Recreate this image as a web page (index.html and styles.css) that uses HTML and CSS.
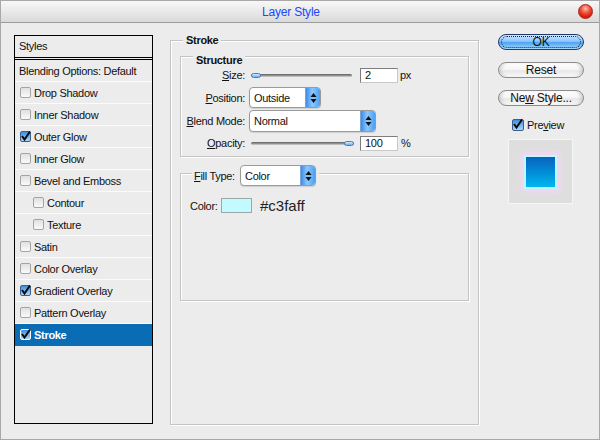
FILE: index.html
```html
<!DOCTYPE html>
<html>
<head>
<meta charset="utf-8">
<link rel="stylesheet" href="styles.css">
</head>
<body>
<div class="window">
  <div class="titlebar">
    <span class="title">Layer Style</span>
    <span class="close"></span>
  </div>
  <div class="content">
    <div class="styles">
      <div class="styles-head">Styles</div>
      <div class="row plain">Blending Options: Default</div>
      <div class="row"><span class="cb"></span>Drop Shadow</div>
      <div class="row"><span class="cb"></span>Inner Shadow</div>
      <div class="row"><span class="cb on"><svg viewBox="0 0 11 11"><path d="M2 5 L4.5 8.5 L10 0.5"/></svg></span>Outer Glow</div>
      <div class="row"><span class="cb"></span>Inner Glow</div>
      <div class="row"><span class="cb"></span>Bevel and Emboss</div>
      <div class="row sub"><span class="cb"></span>Contour</div>
      <div class="row sub"><span class="cb"></span>Texture</div>
      <div class="row"><span class="cb"></span>Satin</div>
      <div class="row"><span class="cb"></span>Color Overlay</div>
      <div class="row"><span class="cb on"><svg viewBox="0 0 11 11"><path d="M2 5 L4.5 8.5 L10 0.5"/></svg></span>Gradient Overlay</div>
      <div class="row"><span class="cb"></span>Pattern Overlay</div>
      <div class="row selected"><span class="cb on"><svg viewBox="0 0 11 11"><path d="M2 5 L4.5 8.5 L10 0.5"/></svg></span>Stroke</div>
    </div>

    <div class="group stroke-group">
      <div class="group-title">Stroke</div>
      <div class="group structure">
        <div class="group-title">Structure</div>
        <div class="frow r-size">
          <span class="lbl"><u>S</u>ize:</span>
          <span class="slider"><span class="thumb"></span></span>
          <span class="input">2</span>
          <span class="unit">px</span>
        </div>
        <div class="frow r-pos">
          <span class="lbl"><u>P</u>osition:</span>
          <span class="select w-pos"><span class="sel-text">Outside</span><span class="arrows"><svg viewBox="0 0 7 12"><path d="M0.5 5 L3.5 1 L6.5 5Z M0.5 7 L3.5 11 L6.5 7Z"/></svg></span></span>
        </div>
        <div class="frow r-blend">
          <span class="lbl"><u>B</u>lend Mode:</span>
          <span class="select w-blend"><span class="sel-text">Normal</span><span class="arrows"><svg viewBox="0 0 7 12"><path d="M0.5 5 L3.5 1 L6.5 5Z M0.5 7 L3.5 11 L6.5 7Z"/></svg></span></span>
        </div>
        <div class="frow r-op">
          <span class="lbl"><u>O</u>pacity:</span>
          <span class="slider end"><span class="thumb"></span></span>
          <span class="input">100</span>
          <span class="unit pct">%</span>
        </div>
      </div>
      <div class="group fill">
        <div class="fill-title">
          <span class="fill-lbl"><u>F</u>ill Type:</span>
          <span class="select w-fill"><span class="sel-text">Color</span><span class="arrows"><svg viewBox="0 0 7 12"><path d="M0.5 5 L3.5 1 L6.5 5Z M0.5 7 L3.5 11 L6.5 7Z"/></svg></span></span>
        </div>
        <div class="color-row">
          <span class="color-lbl">Color:</span>
          <span class="swatch"></span>
          <span class="hex">#c3faff</span>
        </div>
      </div>
    </div>

    <div class="side">
      <div class="btn ok"><span class="focus">OK</span></div>
      <div class="btn">Reset</div>
      <div class="btn">Ne<u>w</u> Style...</div>
      <div class="preview-chk"><span class="cb on"><svg viewBox="0 0 11 11"><path d="M2 5 L4.5 8.5 L10 0.5"/></svg></span>Pre<u>v</u>iew</div>
      <div class="preview"><div class="pv-square"></div></div>
    </div>
  </div>
</div>
</body>
</html>
```

FILE: styles.css
```css
* { box-sizing: border-box; margin: 0; padding: 0; }
html, body { width: 600px; height: 440px; overflow: hidden; }
body {
  font-family: "Liberation Sans", Arial, sans-serif;
  font-size: 11px;
  letter-spacing: -0.3px;
  color: #111;
  background: #ececec;
}
u { text-decoration: underline; text-underline-offset: 1px; }

.window {
  width: 600px;
  height: 440px;
  border: 1px solid #a8a8a8;
  background: #ececec;
  display: flex;
  flex-direction: column;
}

.titlebar {
  height: 22px;
  flex: none;
  background: linear-gradient(#f8f8f8, #e6e6e6 60%, #d9d9d9);
  border-bottom: 1px solid #9c9c9c;
  display: flex;
  align-items: center;
}
.title {
  margin-left: 261px;
  color: #1a47ff;
  font-size: 12px;
  letter-spacing: -0.2px;
}
.close {
  margin-left: auto;
  margin-right: 6px;
  width: 15px;
  height: 15px;
  border-radius: 50%;
  border: 1px solid #a0281c;
  background: radial-gradient(circle at 50% 28%, #ffc0b4 0, #f25a45 35%, #d8200f 70%, #b01a0c 100%);
}

.content {
  flex: 1;
  display: flex;
  padding: 12px 0 0 13px;
}

/* styles list */
.styles {
  width: 139px;
  height: 389px;
  flex: none;
  border: 1px solid #000;
  display: flex;
  flex-direction: column;
}
.styles-head {
  height: 24px;
  line-height: 21px;
  padding-left: 4px;
  border-bottom: 3px double #000;
}
.row {
  height: 22px;
  display: flex;
  align-items: center;
  padding-left: 5px;
  border-bottom: 1px solid #fbfbfb;
  white-space: nowrap;
}
.row.plain { padding-left: 4px; }
.row.sub { padding-left: 18px; }
.row.selected {
  background: #0b6cb6;
  color: #fff;
  font-weight: bold;
  border-bottom-color: #0b6cb6;
}

.cb {
  width: 11px;
  height: 11px;
  flex: none;
  margin-right: 3px;
  border: 1px solid #a4a4a4;
  border-radius: 2px;
  background: linear-gradient(#e0e0e0, #fafafa);
  display: inline-flex;
}
.cb.on {
  border-color: #3a5f8c;
  background: linear-gradient(#3f8fe0, #a8d6fb);
}
.cb svg {
  width: 11px;
  height: 11px;
  margin: -1px 0 0 -1px;
  overflow: visible;
}
.cb svg path { fill: none; stroke: #0a0a0a; stroke-width: 2; }
.selected .cb.on { border-color: #fff; }

/* group boxes */
.group {
  border: 1px solid #c4c4c4;
  box-shadow: inset 1px 1px 0 #fff, 1px 1px 0 #fff;
}
.group-title {
  width: fit-content;
  background: #ececec;
  font-weight: bold;
  line-height: 13px;
  padding: 0 3px;
  margin: -7px 0 0 12px;
}

.stroke-group {
  width: 309px;
  height: 385px;
  flex: none;
  margin: 5px 0 0 17px;
  display: flex;
  flex-direction: column;
}
.structure {
  margin: 9px 9px 0 9px;
  padding: 4px 0 5px 0;
}

.frow {
  display: flex;
  align-items: center;
}
.lbl {
  width: 64px;
  text-align: right;
  flex: none;
  margin-right: 4px;
}
.r-size { height: 16px; }
.r-pos { height: 21px; margin-top: 4px; }
.r-blend { height: 22px; margin-top: 2px; }
.r-op { height: 16px; margin-top: 3px; }

.slider {
  width: 101px;
  height: 3px;
  margin-left: 2px;
  border-radius: 2px;
  background: linear-gradient(#5e5e5e, #9a9a9a 60%, #d8d8d8);
  display: flex;
  align-items: center;
}
.slider.end { width: 103px; justify-content: flex-end; }
.thumb {
  width: 10px;
  height: 5px;
  border-radius: 3px;
  border: 1px solid #4a7fb8;
  background: linear-gradient(#d8ecff, #6aaef0);
}
.input {
  width: 38px;
  height: 15px;
  margin-left: 8px;
  background: #fff;
  border: 1px solid #7d7d7d;
  border-right-color: #c8c8c8;
  border-bottom-color: #c8c8c8;
  padding-left: 4px;
  line-height: 13px;
  font-size: 11px;
}
.r-op .input { margin-left: 6px; }
.unit { margin-left: 2px; }
.pct { margin-left: 3px; }

.select {
  height: 21px;
  display: flex;
  align-items: stretch;
  background: #fff;
  border: 1px solid #9a9a9a;
  border-radius: 4px;
  box-shadow: 0 1px 1px rgba(0,0,0,0.12);
  overflow: hidden;
}
.sel-text {
  flex: 1;
  padding-left: 4px;
  display: flex;
  align-items: center;
  font-size: 11px;
}
.arrows {
  width: 15px;
  flex: none;
  display: flex;
  align-items: center;
  justify-content: center;
  border-left: 1px solid #7aa6d6;
  background: linear-gradient(to right, #3c8ce8, #8cc8ff 45%, #4aa0f2);
}
.arrows svg { width: 7px; height: 12px; }
.arrows svg path { fill: #111; }
.w-pos { width: 72px; }
.w-blend { width: 127px; height: 22px; }
.w-fill { width: 76px; }

.fill {
  height: 128px;
  flex: none;
  margin: 16px 9px 0 9px;
}
.fill-title {
  width: fit-content;
  display: flex;
  align-items: center;
  background: #ececec;
  margin: -9px 0 0 11px;
  padding: 0 3px 0 2px;
}
.fill-lbl { width: 46px; }
.color-row {
  display: flex;
  align-items: center;
  margin: 11px 0 0 9px;
}
.color-lbl { width: 31px; }
.swatch {
  width: 31px;
  height: 15px;
  background: #c3faff;
  border: 1px solid #9aa8aa;
}
.hex {
  margin-left: 8px;
  font-size: 15px;
  letter-spacing: 0;
  color: #222;
}

/* side buttons */
.side {
  width: 86px;
  flex: none;
  margin: -1px 0 0 19px;
  display: flex;
  flex-direction: column;
}
.btn {
  height: 16px;
  margin-bottom: 12px;
  border-radius: 8px;
  border: 1px solid #8c8c8c;
  background: linear-gradient(#ffffff, #f4f4f4 50%, #e6e6e6 55%, #fbfbfb);
  box-shadow: inset 4px 0 4px -3px #bdbdbd, inset -4px 0 4px -3px #bdbdbd;
  text-align: center;
  font-size: 12px;
  letter-spacing: -0.2px;
  line-height: 14px;
  color: #111;
}
.btn.ok {
  border-color: #22386a;
  background: linear-gradient(#cfe8ff, #8ac6ff 45%, #4ea3f2 55%, #a6dbff);
  box-shadow: none;
  padding: 1px 2px;
  line-height: 12px;
}
.btn.ok .focus {
  display: block;
  height: 12px;
  border: 1px dotted #222;
  border-radius: 6px;
  line-height: 10px;
}
.preview-chk {
  display: flex;
  align-items: center;
  margin: 1px 0 0 14px;
  height: 12px;
  font-size: 11px;
}
.preview-chk .cb { width: 12px; height: 12px; margin-right: 3px; }
.preview {
  width: 65px;
  height: 65px;
  margin: 8px 0 0 10px;
  background: #dedede;
  border: 1px solid #f6f6f6;
  display: flex;
  align-items: center;
  justify-content: center;
}
.pv-square {
  width: 33px;
  height: 34px;
  border: 2px solid #bff8ff;
  background: linear-gradient(#0a62bd, #0090da 55%, #00b8ef);
  box-shadow: 0 0 5px 3px rgba(246, 214, 246, 0.9);
}
```
